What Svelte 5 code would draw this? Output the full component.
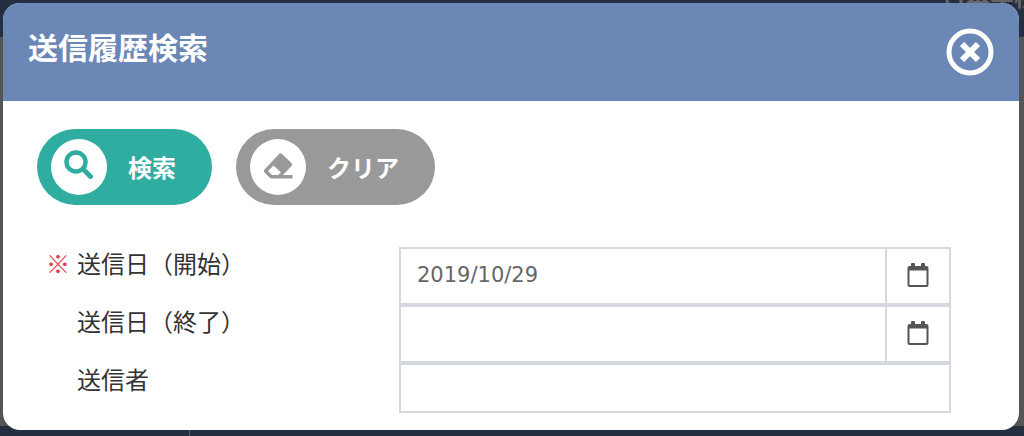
<script>
  let startDate = "2019/10/29";
  let endDate = "";
  let sender = "";

  function handleClear() {
    startDate = "";
    endDate = "";
    sender = "";
  }
</script>

<style>
  :global(body) {
    background: #555;
  }

  .screen {
    position: relative;
    font-family: "Noto Sans CJK JP", sans-serif;
    color: #333;
  }

  .behind {
    position: absolute;
    inset: 0;
    display: flex;
    flex-direction: column;
    justify-content: space-between;
    overflow: hidden;
  }

  .topbar {
    display: flex;
    justify-content: flex-end;
    height: 37px;
    background: #252f42;
    color: #666;
    font-size: 24px;
    line-height: 24px;
    font-weight: 700;
    white-space: nowrap;
  }

  .school {
    width: 82px;
    margin-top: -16px;
  }

  .bottombar {
    height: 10px;
    background: #252f42;
  }

  .divider {
    width: 1px;
    height: 10px;
    margin-left: 189px;
    background: #555d6b;
  }

  .frame {
    position: relative;
    padding: 3px 5px 6px 3px;
  }

  .modal {
    overflow: hidden;
    border-radius: 17px;
    background: #fff;
  }

  .header {
    display: flex;
    justify-content: space-between;
    align-items: flex-start;
    padding: 25px;
    background: #6a87b5;
    color: #fff;
  }

  h1 {
    margin: 0;
    font-size: 30px;
    line-height: 36px;
    font-weight: 700;
  }

  button {
    border: 0;
    padding: 0;
    background: none;
    font-family: inherit;
    cursor: pointer;
  }

  svg {
    display: block;
  }

  .close {
    color: #fff;
  }

  .actions {
    display: flex;
    gap: 24px;
    padding: 28px 34px 0;
  }

  .action {
    display: flex;
    align-items: center;
    gap: 21px;
    padding: 10px 36px 10px 14px;
    border-radius: 39px;
    color: #fff;
    font-size: 24px;
    line-height: 32px;
    font-weight: 700;
  }

  .search {
    background: #2fada1;
  }

  .clear {
    background: #999;
  }

  .icon {
    display: flex;
    align-items: center;
    justify-content: center;
    width: 56px;
    height: 56px;
    border-radius: 50%;
    background: #fff;
    color: #2fada1;
  }

  .clear .icon {
    color: #999;
  }

  .form {
    padding: 42px 68px 17px 43px;
  }

  .row {
    display: flex;
    align-items: flex-start;
  }

  .label {
    display: flex;
    flex: 0 0 353px;
    font-size: 24px;
    line-height: 31px;
  }

  .mark {
    width: 31px;
    color: #e03a4a;
  }

  .field {
    display: flex;
    flex: 1;
    box-sizing: border-box;
    height: 58px;
    border: 2px solid #d5d8df;
  }

  .field.plain {
    height: 50px;
  }

  input {
    flex: 1;
    min-width: 0;
    border: 0;
    padding: 0 16px 2px;
    background: none;
    font: 21px/28px "DejaVu Sans", sans-serif;
    color: #666;
    outline: none;
  }

  .calendar {
    display: flex;
    align-items: center;
    justify-content: center;
    width: 64px;
    padding-bottom: 2px;
    border-left: 2px solid #d5d8df;
    color: #555;
  }
</style>

{#snippet calendarIcon()}
  <svg width="22" height="24" viewBox="0 0 22 24" fill="currentColor" aria-hidden="true">
    <path fill-rule="evenodd" d="M5 0h2q1 0 1 1v2h6V1q0-1 1-1h2q1 0 1 1v2h1.500q2 0 2 2v17q0 2-2 2H2.500q-2 0-2-2V5q0-2 2-2H4V1q0-1 1-1zM2.500 7.500v14q0 .5.500.500h16q.500 0 .500-.500v-14z" />
  </svg>
{/snippet}

<div class="screen">
  <div class="behind" aria-hidden="true">
    <div class="topbar"><span class="school">日本学校</span></div>
    <div class="bottombar"><div class="divider"></div></div>
  </div>

  <div class="frame">
    <div class="modal" role="dialog" aria-labelledby="title">
      <div class="header">
        <h1 id="title">送信履歴検索</h1>
        <button class="close" type="button" aria-label="閉じる">
          <svg width="48" height="48" viewBox="0 0 48 48" fill="none" stroke="currentColor">
            <circle cx="24" cy="24" r="21" stroke-width="5" />
            <path d="M16 16l16 16M32 16L16 32" stroke-width="6" />
          </svg>
        </button>
      </div>

      <div class="actions">
        <button class="action search" type="button">
          <span class="icon">
            <svg width="30" height="34" viewBox="0 0 30 34" fill="none" stroke="currentColor" aria-hidden="true">
              <circle cx="12" cy="12" r="9.500" stroke-width="4.500" />
              <path d="M19 19l7.500 7.500" stroke-width="5" stroke-linecap="round" />
            </svg>
          </span>
          検索
        </button>
        <button class="action clear" type="button" on:click={handleClear}>
          <span class="icon">
            <svg width="30" height="30" viewBox="0 0 30 30" fill="currentColor" aria-hidden="true">
              <path fill-rule="evenodd" d="M16 2q1.500-1.500 3 0l9.500 9q1.500 1.500 0 3l-8.500 9H29.500v3.500H9q-1.500 0-2.500-1L1.500 20.500q-1.500-1.500 0-3zM10.500 13.500L5 19l4 4h6l3-2.500z" />
            </svg>
          </span>
          クリア
        </button>
      </div>

      <form class="form">
        <div class="row">
          <label class="label" for="start"><span class="mark">※</span>送信日（開始）</label>
          <div class="field">
            <input id="start" type="text" bind:value={startDate} />
            <button class="calendar" type="button" aria-label="開始日を選択">{@render calendarIcon()}</button>
          </div>
        </div>
        <div class="row">
          <label class="label" for="end"><span class="mark"></span>送信日（終了）</label>
          <div class="field">
            <input id="end" type="text" bind:value={endDate} />
            <button class="calendar" type="button" aria-label="終了日を選択">{@render calendarIcon()}</button>
          </div>
        </div>
        <div class="row">
          <label class="label" for="sender"><span class="mark"></span>送信者</label>
          <div class="field plain">
            <input id="sender" type="text" bind:value={sender} />
          </div>
        </div>
      </form>
    </div>
  </div>
</div>
